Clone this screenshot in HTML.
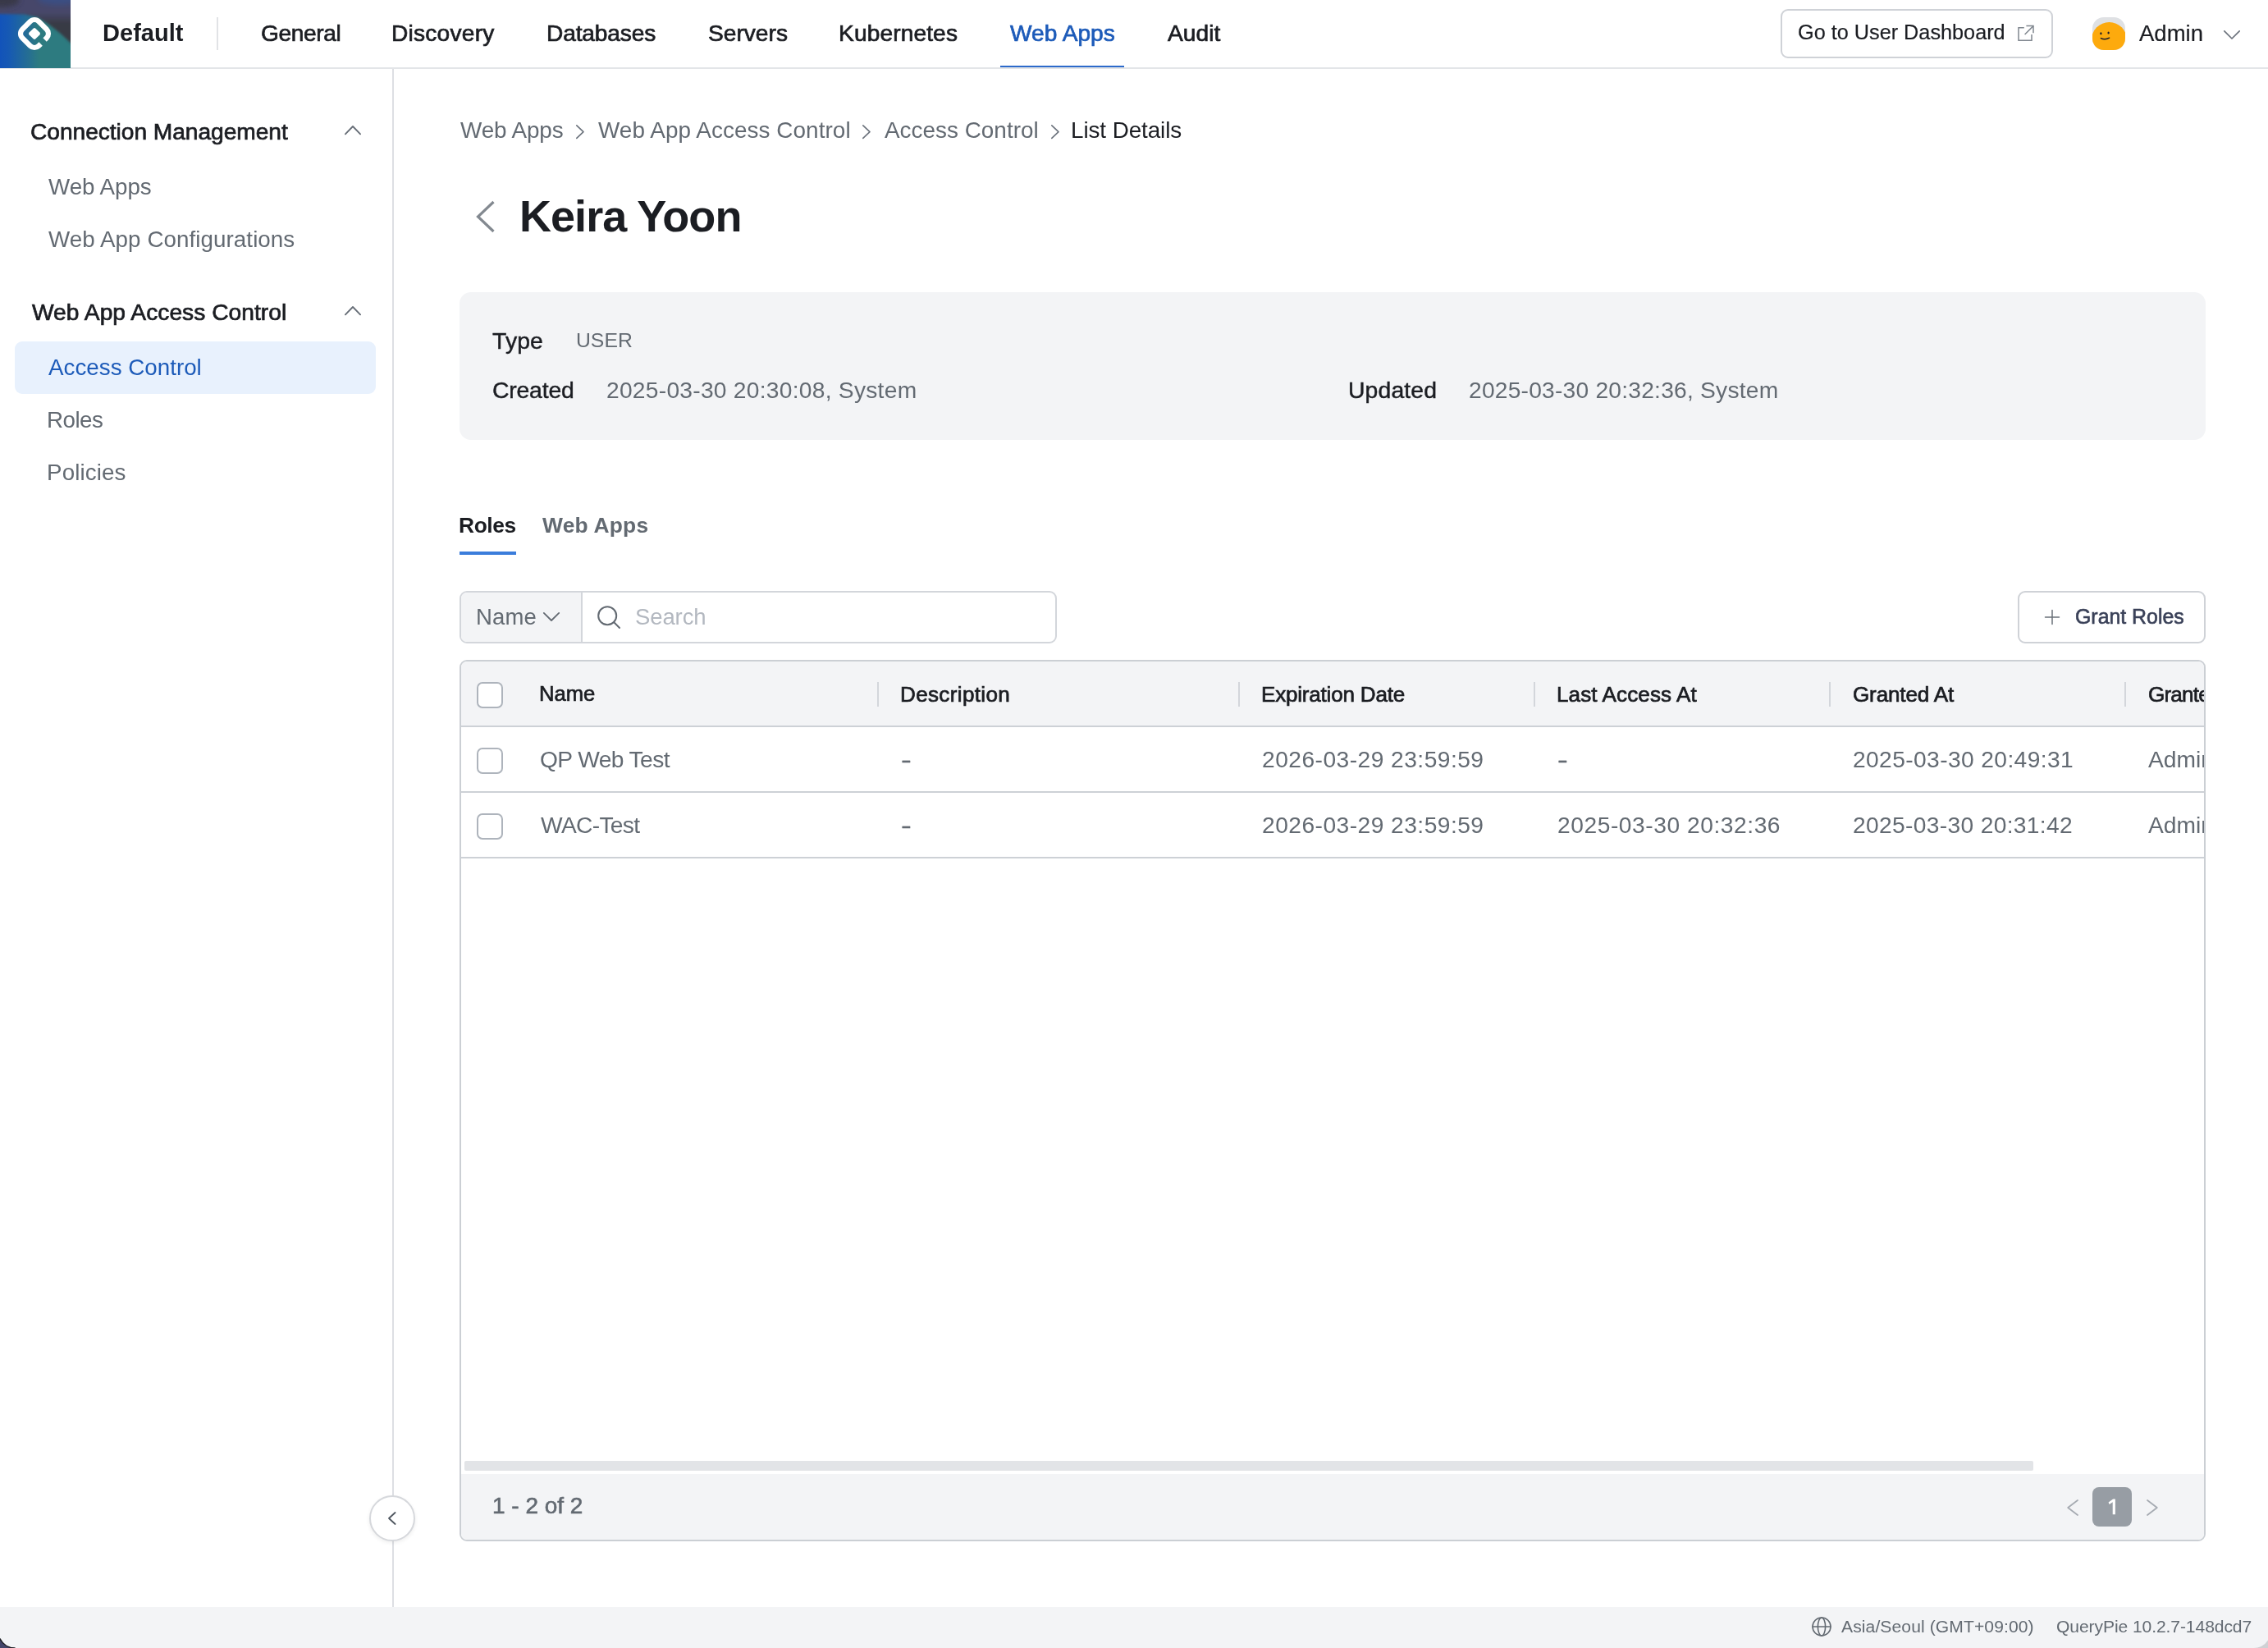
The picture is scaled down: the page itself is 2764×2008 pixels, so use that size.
<!DOCTYPE html>
<html lang="en">
<head>
<meta charset="utf-8">
<title>QueryPie - Access Control - Keira Yoon</title>
<style>
*{box-sizing:border-box;margin:0;padding:0}
html,body{width:2764px;height:2008px;overflow:hidden;background:#fff}
body{position:relative;font-family:"Liberation Sans",sans-serif;color:#1b1d22}
.abs,.t,svg.i{position:absolute}
.t{white-space:nowrap;line-height:1;display:block;will-change:transform}
header{position:absolute;left:0;top:0;width:2764px;height:84px;background:#fff;border-bottom:2px solid #e3e5e8}
nav.side{position:absolute;left:0;top:84px;width:480px;height:1874px;border-right:2px solid #dddfe3;background:#fff}
main{position:absolute;left:480px;top:84px;width:2284px;height:1874px}
footer{position:absolute;left:0;top:1958px;width:2764px;height:50px;background:#f3f4f6}
.cb{position:absolute;width:32px;height:32px;border:2px solid #aeb4bc;border-radius:7px;background:#fff}
.sep{position:absolute;width:2px;height:30px;top:831px;background:#d3d6db}
.hl{position:absolute;left:562px;width:2124px;height:2px;background:#cdd1d6}
svg.i{overflow:visible;fill:none;stroke-linecap:round;stroke-linejoin:round}
</style>
</head>
<body>

<!-- ================= HEADER ================= -->
<header></header>
<div class="abs" id="logo" style="left:0;top:0;width:86px;height:83px;overflow:hidden;background:#2d7b80">
  <svg class="i" style="left:0;top:0" width="86" height="83" viewBox="0 0 86 83">
    <defs>
      <linearGradient id="g1" gradientUnits="userSpaceOnUse" x1="0" y1="0" x2="86" y2="0"><stop offset="0" stop-color="#1253ba"/><stop offset="0.12" stop-color="#1659b4"/><stop offset="0.4" stop-color="#256e93"/><stop offset="0.55" stop-color="#2d7b80"/></linearGradient>
      <linearGradient id="g2" gradientUnits="userSpaceOnUse" x1="0" y1="15" x2="0" y2="29"><stop offset="0" stop-color="#46476a"/><stop offset="1" stop-color="#383a44"/></linearGradient>
      <filter id="bl" x="-20%" y="-20%" width="140%" height="140%"><feGaussianBlur stdDeviation="1.6"/></filter>
      <filter id="bl2" x="-30%" y="-30%" width="160%" height="160%"><feGaussianBlur stdDeviation="3"/></filter>
    </defs>
    <rect width="86" height="83" fill="url(#g1)" stroke="none"/>
    <path d="M-6 -6H92V58L74 41L60 30L46 21L30 17.5L-6 17Z" fill="url(#g2)" stroke="none" filter="url(#bl)"/>
    <ellipse cx="2" cy="0" rx="22" ry="9" fill="#34363f" opacity=".8" stroke="none" filter="url(#bl2)"/>
    <ellipse cx="72" cy="-1" rx="26" ry="7" fill="#1f62c4" opacity=".28" stroke="none" filter="url(#bl2)"/>
    <g transform="translate(42 41) rotate(45)" stroke-linecap="butt">
      <path d="M14.2 -3.6V-6.7A7.5 7.5 0 0 0 6.7 -14.2H-6.7A7.5 7.5 0 0 0 -14.2 -6.7V6.7A7.5 7.5 0 0 0 -6.7 14.2H6.7A7.5 7.5 0 0 0 14.2 6.7V3.4" stroke="#fff" stroke-width="6.2" fill="none"/>
      <rect x="-5.5" y="-5.5" width="11" height="11" rx="2" fill="#fff" stroke="none"/>
    </g>
  </svg>
</div>
<div class="abs" style="left:264px;top:21px;width:2px;height:40px;background:#e1e3e6"></div>
<div class="abs" style="left:1219px;top:80px;width:151px;height:2px;background:#2c6acb"></div>
<!-- dashboard button -->
<div class="abs" style="left:2170px;top:11px;width:332px;height:60px;border:2px solid #cfd2d7;border-radius:9px;background:#fff"></div>
<svg class="i" style="left:2459px;top:30px;stroke-linecap:butt;stroke-linejoin:miter" width="21" height="21" viewBox="0 0 21 21" stroke="#80878f" stroke-width="1.5">
  <path d="M7.8 3.8H1V19.2H17V12"/><path d="M10.4 1.6H19V10.2"/><path d="M19 1.6L8.6 12"/>
</svg>
<!-- avatar -->
<div class="abs" style="left:2550px;top:21px;width:40px;height:40px;border-radius:14px;background:#dfe1e4;overflow:hidden">
  <div class="abs" style="left:-1px;top:6px;width:43px;height:43px;border-radius:22px;background:#fdaa0d"></div>
</div>
<svg class="i" style="left:2550px;top:21px" width="40" height="40" viewBox="0 0 40 40" stroke="#1b1d2a" stroke-width="1.5">
  <ellipse cx="10.4" cy="19.8" rx="1.15" ry="1.5" fill="#1b1d2a" stroke="none"/><ellipse cx="19.6" cy="19.1" rx="1.15" ry="1.5" fill="#1b1d2a" stroke="none"/>
  <path d="M10.4 25.6Q15.5 28.2 20.6 25.2"/>
</svg>
<svg class="i" style="left:2710px;top:37px" width="20" height="11" viewBox="0 0 20 11" stroke="#6b727c" stroke-width="1.7"><path d="M0.8 0.8L10 10L19.2 0.8"/></svg>
<span class="t" style="left:125.1px;top:26.3px;font-size:29.06px;color:#1b1d22;font-weight:700;">Default</span>
<span class="t" style="left:317.5px;top:27.2px;font-size:28.12px;color:#1b1d22;-webkit-text-stroke:0.7px #1b1d22;letter-spacing:-0.393px;">General</span>
<span class="t" style="left:477.4px;top:27.2px;font-size:28.12px;color:#1b1d22;-webkit-text-stroke:0.7px #1b1d22;letter-spacing:0.238px;">Discovery</span>
<span class="t" style="left:665.7px;top:27.2px;font-size:28.12px;color:#1b1d22;-webkit-text-stroke:0.7px #1b1d22;letter-spacing:-0.141px;">Databases</span>
<span class="t" style="left:862.5px;top:27.2px;font-size:28.12px;color:#1b1d22;-webkit-text-stroke:0.7px #1b1d22;letter-spacing:0.016px;">Servers</span>
<span class="t" style="left:1021.7px;top:27.2px;font-size:28.12px;color:#1b1d22;-webkit-text-stroke:0.7px #1b1d22;letter-spacing:0.130px;">Kubernetes</span>
<span class="t" style="left:1230.9px;top:27.2px;font-size:28.12px;color:#1d5bb9;-webkit-text-stroke:0.7px #1d5bb9;letter-spacing:0.022px;">Web Apps</span>
<span class="t" style="left:1422.9px;top:27.2px;font-size:28.12px;color:#1b1d22;-webkit-text-stroke:0.7px #1b1d22;letter-spacing:0.039px;">Audit</span>
<span class="t" style="left:2191.4px;top:27.4px;font-size:25.25px;color:#1b1d22;-webkit-text-stroke:0.2px #1b1d22;">Go to User Dashboard</span>
<span class="t" style="left:2606.7px;top:27.2px;font-size:27.53px;color:#1b1d22;-webkit-text-stroke:0.2px #1b1d22;">Admin</span>

<!-- ================= SIDEBAR ================= -->
<nav class="side"></nav>
<div class="abs" style="left:18px;top:416px;width:440px;height:64px;border-radius:9px;background:#e8f1fd"></div>
<svg class="i" style="left:420px;top:153.4px" width="20" height="12" viewBox="0 0 20 12" stroke="#666d76" stroke-width="1.8"><path d="M0.9 10.4L10 1L19.1 10.4"/></svg>
<svg class="i" style="left:420px;top:373.4px" width="20" height="12" viewBox="0 0 20 12" stroke="#666d76" stroke-width="1.8"><path d="M0.9 10.4L10 1L19.1 10.4"/></svg>
<span class="t" style="left:37.3px;top:145.8px;font-size:28.17px;color:#1b1d22;-webkit-text-stroke:0.7px #1b1d22;letter-spacing:-0.041px;">Connection Management</span>
<span class="t" style="left:58.7px;top:214.0px;font-size:27.76px;color:#636a72;letter-spacing:-0.042px;">Web Apps</span>
<span class="t" style="left:58.7px;top:278.0px;font-size:27.76px;color:#636a72;letter-spacing:0.071px;">Web App Configurations</span>
<span class="t" style="left:38.6px;top:365.8px;font-size:28.17px;color:#1b1d22;-webkit-text-stroke:0.7px #1b1d22;letter-spacing:0.039px;">Web App Access Control</span>
<span class="t" style="left:58.7px;top:434.0px;font-size:27.76px;color:#1d5bb9;letter-spacing:0.012px;">Access Control</span>
<span class="t" style="left:56.5px;top:498.0px;font-size:27.76px;color:#636a72;letter-spacing:-0.546px;">Roles</span>
<span class="t" style="left:56.5px;top:561.6px;font-size:27.76px;color:#636a72;letter-spacing:0.119px;">Policies</span>
<!-- collapse handle -->
<div class="abs" style="left:450px;top:1822px;width:56px;height:56px;border-radius:28px;border:2px solid #d6d8dc;background:#fff;box-shadow:0 2px 5px rgba(0,0,0,.07)"></div>
<svg class="i" style="left:473px;top:1842px" width="10" height="16" viewBox="0 0 10 16" stroke="#4f565f" stroke-width="1.8"><path d="M8.6 1L1 8L8.6 15"/></svg>

<!-- ================= MAIN ================= -->
<main></main>
<!-- breadcrumb chevrons -->
<svg class="i" style="left:702px;top:152.4px" width="10" height="18" viewBox="0 0 10 18" stroke="#6b727c" stroke-width="1.6"><path d="M0.8 0.8L9 8.6L0.8 16.4"/></svg>
<svg class="i" style="left:1051px;top:152.4px" width="10" height="18" viewBox="0 0 10 18" stroke="#6b727c" stroke-width="1.6"><path d="M0.8 0.8L9 8.6L0.8 16.4"/></svg>
<svg class="i" style="left:1281px;top:152.4px" width="10" height="18" viewBox="0 0 10 18" stroke="#6b727c" stroke-width="1.6"><path d="M0.8 0.8L9 8.6L0.8 16.4"/></svg>
<!-- back arrow -->
<svg class="i" style="left:580px;top:245px;stroke-linecap:butt;stroke-linejoin:miter" width="23" height="38" viewBox="0 0 23 38" stroke="#838990" stroke-width="3.2"><path d="M21.5 1L2.5 19L21.5 37"/></svg>
<!-- info panel -->
<div class="abs" style="left:560px;top:356px;width:2128px;height:180px;border-radius:14px;background:#f3f4f6"></div>
<!-- tab underline -->
<div class="abs" style="left:560px;top:672px;width:69px;height:4px;background:#3b7ddb"></div>
<!-- filter -->
<div class="abs" style="left:560px;top:720px;width:728px;height:64px;border:2px solid #d3d6db;border-radius:9px;background:#fff;overflow:hidden">
  <div class="abs" style="left:0;top:0;width:148px;height:60px;background:#f3f4f6;border-right:2px solid #d3d6db"></div>
</div>
<svg class="i" style="left:662px;top:746px" width="20" height="11" viewBox="0 0 20 11" stroke="#636a72" stroke-width="1.8"><path d="M0.8 0.9L10 10L19.2 0.9"/></svg>
<svg class="i" style="left:728px;top:738px" width="28" height="28" viewBox="0 0 28 28" stroke="#636a72" stroke-width="2"><circle cx="12.2" cy="12.2" r="11"/><path d="M20.3 20.3L27 27"/></svg>
<!-- grant roles -->
<div class="abs" style="left:2459px;top:720px;width:229px;height:64px;border:2px solid #cfd2d7;border-radius:9px;background:#fff"></div>
<svg class="i" style="left:2492px;top:743px" width="18" height="18" viewBox="0 0 18 18" stroke="#6b727a" stroke-width="1.5"><path d="M9 0.5V17.5M0.5 9H17.5"/></svg>
<!-- table -->
<div class="abs" style="left:560px;top:804px;width:2128px;height:1074px;border:2px solid #cbcfd4;border-radius:9px;background:#fff;overflow:hidden">
  <div class="abs" style="left:0;top:0;width:2124px;height:78px;background:#f3f4f6"></div>
  <div class="abs" style="left:0;top:990px;width:2124px;height:80px;background:#f3f4f6"></div>
  <div class="abs" style="left:4px;top:974px;width:1912px;height:12px;border-radius:2px;background:#e2e4e7"></div>
</div>
<div class="hl" style="top:884px"></div>
<div class="hl" style="top:964px"></div>
<div class="hl" style="top:1044px"></div>
<div class="sep" style="left:1069px"></div>
<div class="sep" style="left:1509px"></div>
<div class="sep" style="left:1869px"></div>
<div class="sep" style="left:2229px"></div>
<div class="sep" style="left:2589px"></div>
<div class="cb" style="left:581px;top:831px"></div>
<div class="cb" style="left:581px;top:911px"></div>
<div class="cb" style="left:581px;top:991px"></div>
<!-- pagination -->
<svg class="i" style="left:2519px;top:1827px" width="14" height="20" viewBox="0 0 14 20" stroke="#a6abb2" stroke-width="1.8"><path d="M13 1L1.2 10L13 19"/></svg>
<div class="abs" style="left:2550px;top:1812px;width:48px;height:48px;border-radius:8px;background:#979da4"></div>
<svg class="i" style="left:2568px;top:1824px" width="12" height="22" viewBox="0 0 12 22" aria-label="1"><path d="M1.6 6.6L7.2 2.6H9.9V21.2H6.7V6.2L2.6 9Z" fill="#fff" stroke="none"/></svg>
<svg class="i" style="left:2616px;top:1827px" width="14" height="20" viewBox="0 0 14 20" stroke="#a6abb2" stroke-width="1.8"><path d="M1 1L12.8 10L1 19"/></svg>
<span class="t" style="left:560.6px;top:145.4px;font-size:27.87px;color:#636a72;letter-spacing:-0.114px;">Web Apps</span>
<span class="t" style="left:728.9px;top:145.4px;font-size:27.87px;color:#636a72;letter-spacing:0.071px;">Web App Access Control</span>
<span class="t" style="left:1077.9px;top:145.4px;font-size:27.87px;color:#636a72;letter-spacing:0.024px;">Access Control</span>
<span class="t" style="left:1304.7px;top:145.4px;font-size:27.87px;color:#1b1d22;letter-spacing:-0.091px;">List Details</span>
<span class="t" style="left:633.0px;top:235.8px;font-size:54.00px;color:#1b1d22;font-weight:700;letter-spacing:-0.968px;">Keira Yoon</span>
<span class="t" style="left:600.3px;top:401.2px;font-size:28.37px;color:#1b1d22;-webkit-text-stroke:0.45px #1b1d22;letter-spacing:0.132px;">Type</span>
<span class="t" style="left:701.6px;top:403.1px;font-size:24.75px;color:#636a72;">USER</span>
<span class="t" style="left:599.5px;top:460.9px;font-size:28.37px;color:#1b1d22;-webkit-text-stroke:0.45px #1b1d22;letter-spacing:-0.193px;">Created</span>
<span class="t" style="left:738.6px;top:461.0px;font-size:28.20px;color:#636a72;letter-spacing:0.259px;">2025-03-30 20:30:08, System</span>
<span class="t" style="left:1642.8px;top:460.9px;font-size:28.37px;color:#1b1d22;-webkit-text-stroke:0.45px #1b1d22;letter-spacing:0.127px;">Updated</span>
<span class="t" style="left:1789.6px;top:461.0px;font-size:28.20px;color:#636a72;letter-spacing:0.221px;">2025-03-30 20:32:36, System</span>
<span class="t" style="left:558.8px;top:626.7px;font-size:26.38px;color:#1b1d22;font-weight:700;letter-spacing:-0.399px;">Roles</span>
<span class="t" style="left:661.0px;top:626.7px;font-size:26.38px;color:#636a72;font-weight:700;letter-spacing:0.228px;">Web Apps</span>
<span class="t" style="left:580.3px;top:738.2px;font-size:27.50px;color:#636a72;letter-spacing:0.171px;">Name</span>
<span class="t" style="left:774.2px;top:738.2px;font-size:27.50px;color:#b3b8c0;letter-spacing:-0.103px;">Search</span>
<span class="t" style="left:2529.0px;top:738.5px;font-size:24.88px;color:#3a4158;-webkit-text-stroke:0.6px #3a4158;">Grant Roles</span>
<span class="t" style="left:657.1px;top:833.4px;font-size:25.62px;color:#1b1d22;-webkit-text-stroke:0.7px #1b1d22;">Name</span>
<span class="t" style="left:1096.9px;top:833.2px;font-size:26.09px;color:#1b1d22;-webkit-text-stroke:0.7px #1b1d22;letter-spacing:0.331px;">Description</span>
<span class="t" style="left:1536.9px;top:833.2px;font-size:26.09px;color:#1b1d22;-webkit-text-stroke:0.7px #1b1d22;letter-spacing:-0.222px;">Expiration Date</span>
<span class="t" style="left:1896.9px;top:833.2px;font-size:26.09px;color:#1b1d22;-webkit-text-stroke:0.7px #1b1d22;letter-spacing:0.095px;">Last Access At</span>
<span class="t" style="left:2257.6px;top:833.2px;font-size:26.09px;color:#1b1d22;-webkit-text-stroke:0.7px #1b1d22;letter-spacing:-0.160px;">Granted At</span>
<span class="t" style="left:2617.6px;top:833.2px;font-size:26.09px;color:#1b1d22;-webkit-text-stroke:0.7px #1b1d22;letter-spacing:-0.800px;width:68.4px;overflow:hidden;">Granted By</span>
<span class="t" style="left:657.9px;top:911.4px;font-size:28.20px;color:#636a72;letter-spacing:-0.605px;">QP Web Test</span>
<span class="t" style="left:1097.7px;top:911.4px;font-size:28.20px;color:#636a72;-webkit-text-stroke:0.3px #636a72;transform:scaleX(1.36);transform-origin:0 50%;">-</span>
<span class="t" style="left:1537.6px;top:911.4px;font-size:28.20px;color:#636a72;letter-spacing:0.461px;">2026-03-29 23:59:59</span>
<span class="t" style="left:1897.7px;top:911.4px;font-size:28.20px;color:#636a72;-webkit-text-stroke:0.3px #636a72;transform:scaleX(1.36);transform-origin:0 50%;">-</span>
<span class="t" style="left:2257.6px;top:911.4px;font-size:28.20px;color:#636a72;letter-spacing:0.385px;">2025-03-30 20:49:31</span>
<span class="t" style="left:2618.3px;top:911.4px;font-size:28.20px;color:#636a72;width:67.7px;overflow:hidden;">Admin</span>
<span class="t" style="left:659.1px;top:991.4px;font-size:28.20px;color:#636a72;letter-spacing:-0.675px;">WAC-Test</span>
<span class="t" style="left:1097.7px;top:991.4px;font-size:28.20px;color:#636a72;-webkit-text-stroke:0.3px #636a72;transform:scaleX(1.36);transform-origin:0 50%;">-</span>
<span class="t" style="left:1537.6px;top:991.4px;font-size:28.20px;color:#636a72;letter-spacing:0.461px;">2026-03-29 23:59:59</span>
<span class="t" style="left:1897.6px;top:991.4px;font-size:28.20px;color:#636a72;letter-spacing:0.544px;">2025-03-30 20:32:36</span>
<span class="t" style="left:2257.6px;top:991.4px;font-size:28.20px;color:#636a72;letter-spacing:0.332px;">2025-03-30 20:31:42</span>
<span class="t" style="left:2618.3px;top:991.4px;font-size:28.20px;color:#636a72;width:67.7px;overflow:hidden;">Admin</span>
<span class="t" style="left:600.3px;top:1821.4px;font-size:27.98px;color:#636a72;-webkit-text-stroke:0.6px #636a72;">1 - 2 of 2</span>

<!-- ================= STATUS BAR ================= -->
<footer></footer>
<svg class="i" style="left:2208px;top:1970px" width="24" height="24" viewBox="0 0 24 24" stroke="#636a72" stroke-width="1.6"><circle cx="12" cy="12" r="11"/><ellipse cx="12" cy="12" rx="4.6" ry="11"/><path d="M1 12H23"/></svg>
<span class="t" style="left:2244.0px;top:1970.9px;font-size:21.08px;color:#636a72;letter-spacing:0.097px;">Asia/Seoul (GMT+09:00)</span>
<span class="t" style="left:2506.0px;top:1970.9px;font-size:21.08px;color:#636a72;letter-spacing:-0.092px;">QueryPie 10.2.7-148dcd7</span>
<!-- window corners -->
<svg class="i" style="left:0;top:1984px" width="24" height="24" viewBox="0 1984 24 24"><path d="M0 1996.8A20.4 20.4 0 0 0 18 2008H0Z" fill="#43456a" stroke="none"/><path d="M0 1996.8A20.4 20.4 0 0 0 18 2008" stroke="#1f2026" stroke-width="1.6" fill="none"/></svg>
<svg class="i" style="left:2740px;top:1984px" width="24" height="24" viewBox="2740 1984 24 24"><path d="M2764 1998.6A20.4 20.4 0 0 1 2745 2008H2764Z" fill="#cfd1d4" stroke="none"/></svg>
</body>
</html>
